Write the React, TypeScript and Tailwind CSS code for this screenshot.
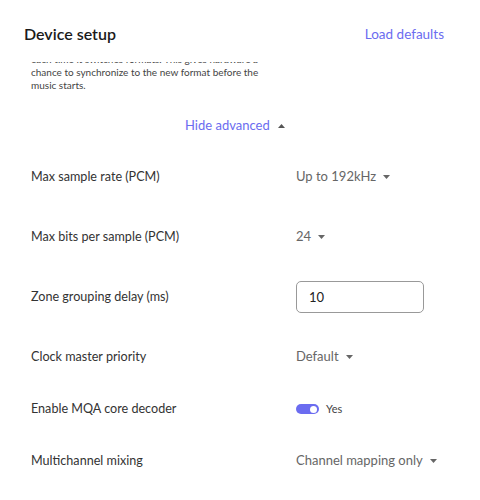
import React from 'react'

const Caret = ({ up = false }: { up?: boolean }) => (
    <svg width="7" height="4" viewBox="0 0 7 4" className={up ? 'rotate-180' : ''} aria-hidden="true">
        <path d="M0 0h7L3.5 4z" fill="currentColor" />
    </svg>
)

const Dropdown = ({ value }: { value: string }) => (
    <div className="flex items-center gap-[7px] text-[13px] text-[#666]">
        <span>{value}</span>
        <Caret />
    </div>
)

const Row = ({ label, h = 'h-[60px]', children }: { label: string; h?: string; children: React.ReactNode }) => (
    <div className={`grid grid-cols-[265px_1fr] items-center ${h}`}>
        <span className="text-[12.6px] text-[#333]">{label}</span>
        <div>{children}</div>
    </div>
)

export default function App() {
    return (
        <div className="w-[480px] h-[500px] bg-white overflow-hidden flex flex-col" style={{ fontFamily: 'Lato, "Open Sans", sans-serif' }}>
            <div className="h-[62px] shrink-0 flex items-start justify-between px-6 pt-[24px]">
                <h1 className="text-[16px] leading-[20px] font-semibold text-[#1a1a1a]">Device setup</h1>
                <button className="text-[13.5px] leading-[20px] text-[#6b6cf0] pr-[12px]">Load defaults</button>
            </div>
            <div className="flex-1 overflow-hidden pl-[31px]">
                <p className="mt-[-9px] w-[250px] text-[10px] leading-[13px] text-[#444]">
                    each time it switches formats. This gives hardware a<br />
                    chance to synchronize to the new format before the<br />
                    music starts.
                </p>
                <div className="mt-[23px] h-[22px] flex items-center gap-[8px] pl-[154px] text-[13px] text-[#6b6cf0]">
                    <span>Hide advanced</span>
                    <span className="text-[#555]"><Caret up /></span>
                </div>
                <div className="mt-[10px]">
                    <Row label="Max sample rate (PCM)"><Dropdown value="Up to 192kHz" /></Row>
                    <Row label="Max bits per sample (PCM)"><Dropdown value="24" /></Row>
                    <Row label="Zone grouping delay (ms)">
                        <input
                            defaultValue="10"
                            className="w-[128px] h-[32px] rounded-[5px] border border-[#999] px-[12px] text-[13px] text-[#222] outline-none"
                        />
                    </Row>
                    <Row label="Clock master priority"><Dropdown value="Default" /></Row>
                    <Row label="Enable MQA core decoder" h="h-[44px]">
                        <div className="flex items-center gap-[7px]">
                            <div className="w-[23px] h-[10px] rounded-full bg-[#6b6cf0] flex items-center justify-end pr-[2px]">
                                <div className="w-[7px] h-[7px] rounded-full bg-white" />
                            </div>
                            <span className="text-[11px] text-[#444]">Yes</span>
                        </div>
                    </Row>
                    <Row label="Multichannel mixing"><Dropdown value="Channel mapping only" /></Row>
                </div>
            </div>
        </div>
    )
}
